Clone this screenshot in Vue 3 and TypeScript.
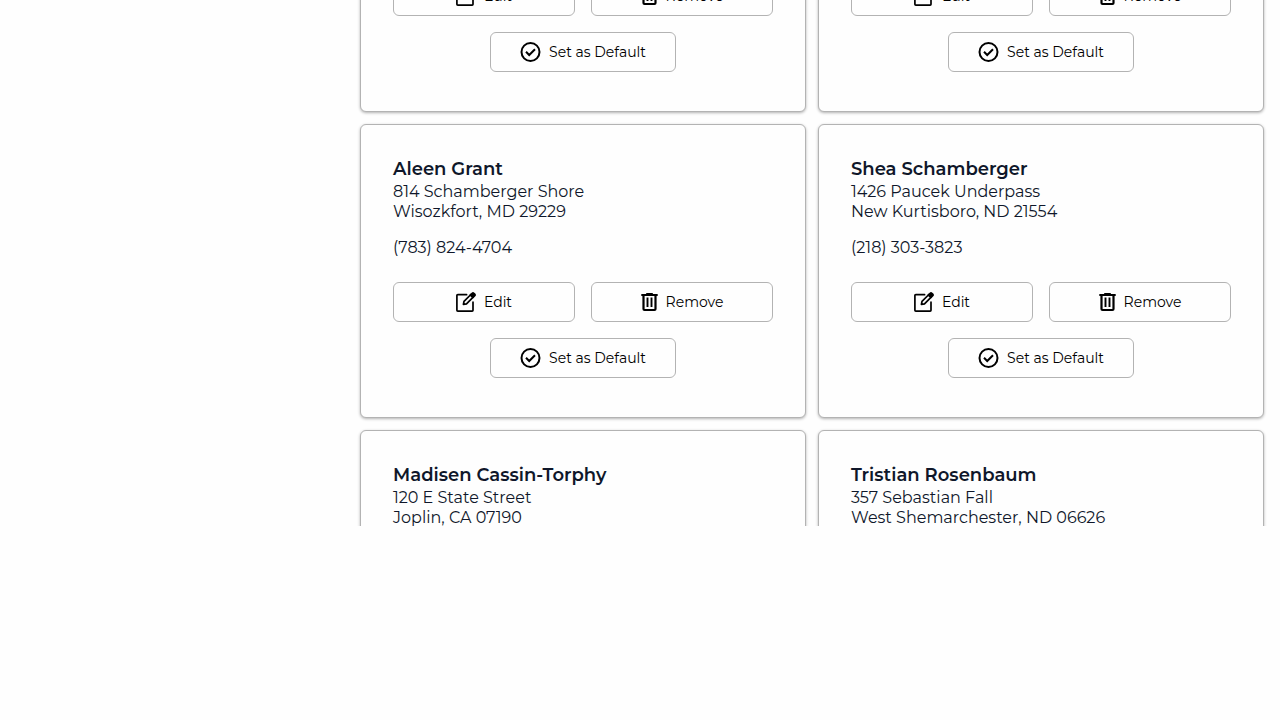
<script setup lang="ts">
interface Address {
  id: number
  name?: string
  lines?: string[]
  phone?: string
  actions: boolean
}

const addresses: Address[] = [
  { id: 1, actions: true },
  { id: 2, actions: true },
  { id: 3, name: 'Aleen Grant', lines: ['814 Schamberger Shore', 'Wisozkfort, MD 29229'], phone: '(783) 824-4704', actions: true },
  { id: 4, name: 'Shea Schamberger', lines: ['1426 Paucek Underpass', 'New Kurtisboro, ND 21554'], phone: '(218) 303-3823', actions: true },
  { id: 5, name: 'Madisen Cassin-Torphy', lines: ['120 E State Street', 'Joplin, CA 07190'], actions: false },
  { id: 6, name: 'Tristian Rosenbaum', lines: ['357 Sebastian Fall', 'West Shemarchester, ND 06626'], actions: false },
]
</script>

<template>
  <main class="page">
    <section class="list" aria-label="Addresses">
      <article v-for="a in addresses" :key="a.id" class="card">
        <div v-if="a.name" class="details">
          <h2 class="name">{{ a.name }}</h2>
          <p v-for="line in a.lines" :key="line" class="line">{{ line }}</p>
          <p v-if="a.phone" class="line phone">{{ a.phone }}</p>
        </div>
        <div v-if="a.actions" class="actions">
          <button type="button" class="btn">
            <svg width="20" height="20" viewBox="0 0 20 20" fill="none" stroke="currentColor" stroke-width="1.7" stroke-linecap="round" stroke-linejoin="round" aria-hidden="true">
              <path d="M10.6 2.7H1.8Q.9 2.7 .9 3.6V18.2Q.9 19.1 1.8 19.1H16.1Q17 19.1 17 18.2V10.2" />
              <path d="M7.4 12.4 8 9.4 14.9 2.5 17.4 4.9 10.5 11.8Z" />
              <path d="M14.3 3.1 16.2 1.3Q17 .6 17.8 1.3L18.7 2.2Q19.4 2.9 18.7 3.7L16.9 5.5Z" fill="currentColor" />
            </svg>
            <span>Edit</span>
          </button>
          <button type="button" class="btn">
            <svg width="17" height="20" viewBox="0 0 17 20" fill="none" stroke="currentColor" stroke-width="2" aria-hidden="true">
              <path d="M0.3 3H16.7" />
              <path d="M5.2 2H11.8" />
              <path d="M2.5 3V17Q2.5 18 3.5 18H13.5Q14.5 18 14.5 17V3" stroke-width="2.2" />
              <path d="M6.5 5.5V15M10.5 5.5V15" stroke-width="1.9" />
            </svg>
            <span>Remove</span>
          </button>
          <button type="button" class="btn default">
            <svg width="21" height="20" viewBox="0 0 21 20" fill="none" stroke="currentColor" stroke-width="2" aria-hidden="true">
              <circle cx="10.5" cy="10" r="9" />
              <path d="M6 9.8 9.2 13 15 7.2" />
            </svg>
            <span>Set as Default</span>
          </button>
        </div>
      </article>
    </section>
  </main>
</template>

<style>
body {
  margin: 0;
  background: #fefefe;
}
</style>

<style scoped>
.page {
  box-sizing: border-box;
  height: calc(100vh - 194px);
  overflow: hidden;
  padding: 0 16px 0 360px;
  font-family: Montserrat, Inter, "Open Sans", sans-serif;
  color: #0f172a;
}

.list {
  display: grid;
  grid-template-columns: repeat(2, minmax(0, 1fr));
  gap: 12px;
  margin-top: -57px;
}

.card {
  box-sizing: border-box;
  padding: 32px 32px 39px;
  border: 1px solid #b3b3b3;
  border-radius: 6px;
  background: #fefefe;
  box-shadow: 0 1px 3px rgba(0, 0, 0, 0.3);
}

.details + .actions {
  margin-top: 24px;
}

.name {
  margin: 0;
  font-size: 18px;
  line-height: 25px;
  font-weight: 600;
}

.line {
  margin: 0;
  font-size: 16px;
  line-height: 20px;
  font-weight: 400;
}

.phone {
  margin-top: 16px;
}

.actions {
  display: grid;
  grid-template-columns: repeat(2, minmax(0, 1fr));
  gap: 16px;
}

.btn {
  box-sizing: border-box;
  display: flex;
  align-items: center;
  justify-content: center;
  gap: 8px;
  height: 40px;
  padding: 0 16px;
  border: 1px solid #b3b3b3;
  border-radius: 6px;
  background: #fefefe;
  color: #000;
  font-family: inherit;
  font-size: 14px;
  line-height: 20px;
  white-space: nowrap;
  cursor: pointer;
}

.btn svg {
  flex: none;
}

.default {
  grid-column: 1 / -1;
  justify-self: center;
  width: 186px;
}
</style>
